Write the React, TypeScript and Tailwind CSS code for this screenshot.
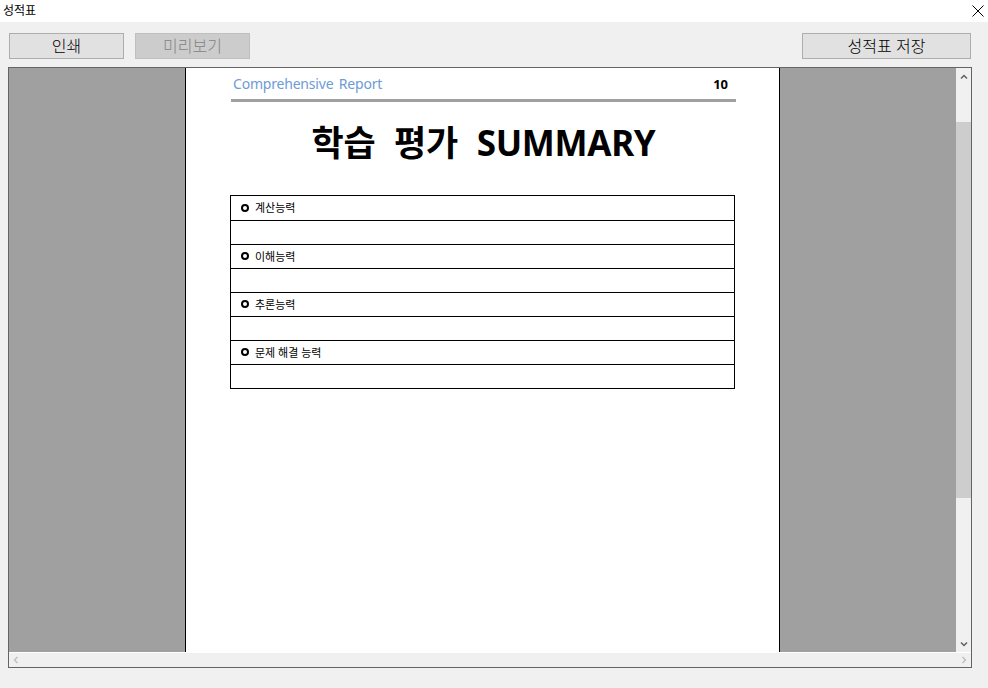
import React from "react";

const sections = ["계산능력", "이해능력", "추론능력", "문제 해결 능력"];

const font = "font-['Noto_Sans','Noto_Sans_CJK_KR',sans-serif]";

const Chevron = ({ dir, className }: { dir: "up" | "down" | "left" | "right"; className: string }) => {
  const d = {
    up: "M1 6 L5 2 L9 6",
    down: "M1 2 L5 6 L9 2",
    left: "M6 1 L2 5 L6 9",
    right: "M2 1 L6 5 L2 9",
  }[dir];
  const box = dir === "up" || dir === "down" ? "0 0 10 8" : "0 0 8 10";
  return (
    <svg viewBox={box} className={className} fill="none" strokeWidth="2">
      <path d={d} />
    </svg>
  );
};

const Page = () => (
  <div className="ml-[176px] flex h-full w-[595px] flex-col border-x border-black bg-white">
    <div className="ml-[45px] w-[505px]">
      <div className="flex h-[31px] items-end justify-between pb-[6px] pl-[2px] pr-[8px]">
        <span className="text-[14px] leading-[18px] tracking-[-0.2px] text-[#6d9bd6] [word-spacing:2px]">Comprehensive Report</span>
        <span className="text-[13px] font-bold leading-[18px] text-black">10</span>
      </div>
      <div className="h-[3px] bg-[#a0a0a0]" />
      <h1 className="mt-[16px] text-center text-[35px] font-bold leading-[50px] tracking-[-0.3px] text-black [word-spacing:10px]">
        학습 평가 SUMMARY
      </h1>
      <div className="ml-[-1px] mt-[27px] w-[505px] border border-black">
        {sections.map((s, i) => (
          <React.Fragment key={s}>
            <div className={`flex h-[24px] items-center pl-[10px] pb-[1px] ${i > 0 ? "border-t border-black" : ""}`}>
              <span className="mr-[6px] h-[8px] w-[8px] rounded-full border-2 border-black" />
              <span className="text-[11px] leading-none text-black">{s}</span>
            </div>
            <div className="h-[24px] border-t border-black" />
          </React.Fragment>
        ))}
      </div>
    </div>
  </div>
);

export default function App() {
  return (
    <div className={`flex h-[688px] w-[988px] flex-col bg-[#f0f0f0] ${font}`}>
      <div className="flex h-[22px] items-center justify-between bg-white pl-[3px] pr-[4px]">
        <span className="text-[12px] leading-none text-black">성적표</span>
        <svg viewBox="0 0 12 12" className="h-[12px] w-[12px]" stroke="black" strokeWidth="1">
          <path d="M0.5 0.5 L11.5 11.5 M11.5 0.5 L0.5 11.5" />
        </svg>
      </div>

      <div className="mt-[11px] flex h-[26px] items-stretch justify-between pl-[9px] pr-[17px]">
        <div className="flex gap-[11px]">
          <button className="w-[115px] border border-[#adadad] bg-[#e1e1e1] text-[16px] font-light text-black">인쇄</button>
          <button className="w-[115px] border border-[#bfbfbf] bg-[#cccccc] text-[16px] font-light text-[#838383]">미리보기</button>
        </div>
        <button className="w-[169px] border border-[#adadad] bg-[#e1e1e1] text-[16px] font-light text-black">성적표 저장</button>
      </div>

      <div className="ml-[8px] mt-[8px] flex h-[601px] w-[964px] flex-col border border-[#646464]">
        <div className="flex h-[584px]">
          <div className="flex-1 overflow-hidden bg-[#a0a0a0]">
            <Page />
          </div>
          <div className="flex w-[15px] flex-col bg-[#f0f0f0]">
            <div className="flex h-[17px] items-center justify-center">
              <Chevron dir="up" className="h-[6px] w-[8px] stroke-[#606060]" />
            </div>
            <div className="mt-[37px] h-[376px] bg-[#cdcdcd]" />
            <div className="flex-1" />
            <div className="flex h-[17px] items-center justify-center">
              <Chevron dir="down" className="h-[6px] w-[8px] stroke-[#606060]" />
            </div>
          </div>
        </div>
        <div className="flex flex-1 items-center justify-between border-t border-white bg-[#f0f0f0] px-[4px]">
          <Chevron dir="left" className="h-[8px] w-[6px] stroke-[#c0c0c0]" />
          <Chevron dir="right" className="h-[8px] w-[6px] stroke-[#c0c0c0]" />
        </div>
      </div>
    </div>
  );
}
